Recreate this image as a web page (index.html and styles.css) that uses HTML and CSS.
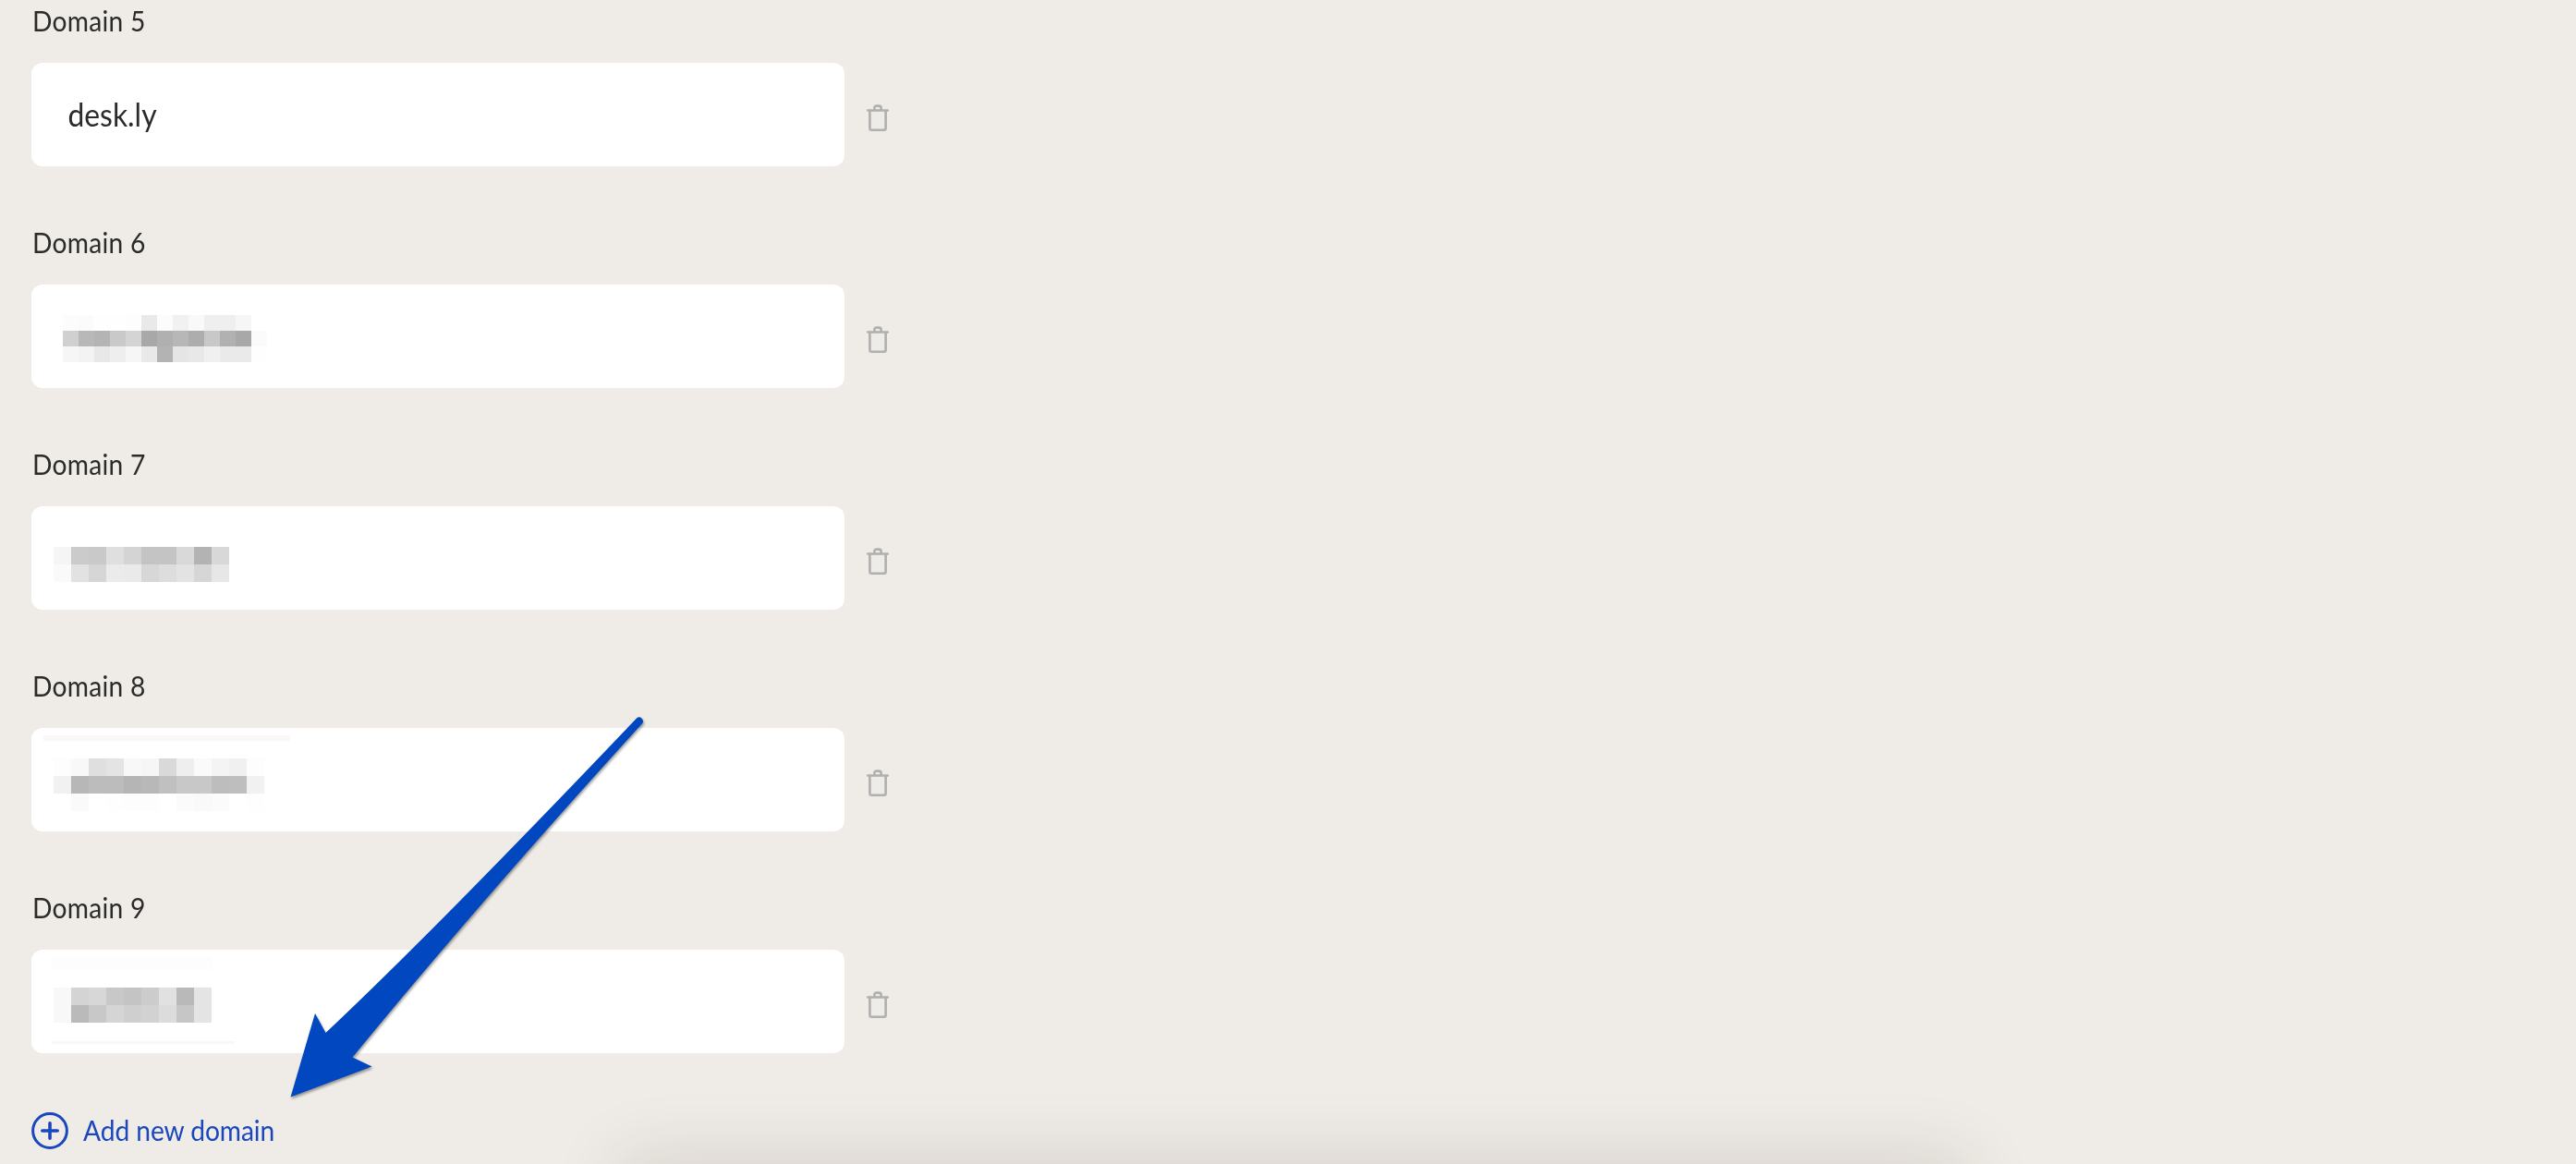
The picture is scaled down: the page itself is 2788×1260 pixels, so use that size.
FILE: index.html
```html
<!DOCTYPE html>
<html lang="en">
<head>
    <meta charset="UTF-8">
    <title>Domains</title>
    <link rel="stylesheet" href="styles.css">
</head>

<body>
    <svg class="sprite" width="0" height="0">
        <symbol id="trash" viewBox="0 0 24 30">
            <path d="M1.2 6.5h21.6M3.4 7v18.8q0 2 2 2h13.2q2 0 2-2V7M8.4 6V4q0-2.4 2.4-2.4h2.4q2.4 0 2.4 2.4v2" fill="none" stroke="#b0b0b0" stroke-width="2.6" stroke-linecap="round"/>
        </symbol>
    </svg>

    <main>
        <form class="domains">
            <div class="domain">
                <label>Domain 5</label>
                <div class="row">
                    <div class="field"><span class="value">desk.ly</span></div>
                    <svg class="trash"><use href="#trash"/></svg>
                </div>
            </div>
            <div class="domain">
                <label>Domain 6</label>
                <div class="row">
                    <div class="field"><div class="mosaic small" data-mosaic="domain6"></div></div>
                    <svg class="trash"><use href="#trash"/></svg>
                </div>
            </div>
            <div class="domain">
                <label>Domain 7</label>
                <div class="row">
                    <div class="field"><div class="mosaic low" data-mosaic="domain7"></div></div>
                    <svg class="trash"><use href="#trash"/></svg>
                </div>
            </div>
            <div class="domain">
                <label>Domain 8</label>
                <div class="row">
                    <div class="field"><i class="streak top"></i><div class="mosaic" data-mosaic="domain8"></div></div>
                    <svg class="trash"><use href="#trash"/></svg>
                </div>
            </div>
            <div class="domain">
                <label>Domain 9</label>
                <div class="row">
                    <div class="field"><i class="streak faint"></i><div class="mosaic mid" data-mosaic="domain9"></div><i class="streak bottom"></i></div>
                    <svg class="trash"><use href="#trash"/></svg>
                </div>
            </div>
        </form>

        <a class="add">
            <svg width="40" height="40" viewBox="0 0 40 40" fill="none" stroke="#1a47bd" stroke-linecap="round">
                <circle cx="20" cy="20" r="18.4" stroke-width="3"/>
                <path d="M20 11.8v16.4M11.8 20h16.4" stroke-width="3.6"/>
            </svg>
            <span>Add new domain</span>
        </a>
    </main>

    <svg class="arrow" width="420" height="440" viewBox="300 765 420 440">
        <path d="M314.5 1187.5L341 1097L352.5 1118Q469 1008.5 689 777.5A4.2 4.2 0 0 1 695 783.3Q520 975.5 381.5 1144.5L402.5 1154.5Z" fill="#0047c0"/>
    </svg>
    <div class="dock-shadow"></div>
<script src="mosaic.js"></script>
</body>
</html>
```
FILE: styles.css
```css
body {
    position: relative;
    height: 1260px;
    margin: 0;
    overflow: hidden;
    background-color: #efebe6;
    color: #2b2b2b;
    font-family: Lato, sans-serif;
}

main {
    padding-left: 34px;
}

.sprite {
    position: absolute;
}

.domains {
    display: flex;
    flex-direction: column;
    gap: 60px;
}

label, .value, .add span {
    transform: scaleX(0.91);
    transform-origin: left;
}

label {
    display: block;
    height: 48px;
    margin-bottom: 20px;
    padding-left: 1px;
    font-size: 31px;
    line-height: 45px;
    letter-spacing: 0.3px;
}

.row {
    display: flex;
    align-items: center;
    gap: 24px;
}

.field {
    position: relative;
    box-sizing: border-box;
    width: 880px;
    height: 112px;
    padding: 33px 24px 0;
    background: #fff;
    border-radius: 12px;
}

.value {
    display: block;
    padding-left: 17px;
    font-size: 35px;
    line-height: 45px;
}

.trash {
    width: 24px;
    height: 30px;
    margin-top: 8px;
}

.mosaic {
    display: grid;
    grid-auto-rows: 19px;
    justify-content: start;
}

.mosaic.small {
    grid-auto-rows: 17px;
    margin-left: 10px;
}

.mosaic.mid {
    margin-top: 8px;
}

.mosaic.low {
    margin-top: 11px;
}

.streak {
    position: absolute;
    background: #f9f8f6;
}

.streak.top {
    left: 13px;
    top: 8px;
    width: 267px;
    height: 6px;
}

.streak.faint {
    left: 22px;
    top: 8px;
    width: 173px;
    height: 14px;
    background: #fdfdfd;
}

.streak.bottom {
    left: 22px;
    top: 99px;
    width: 198px;
    height: 3px;
}

.add {
    display: flex;
    align-items: center;
    gap: 16px;
    margin-top: 64px;
    color: #1a47bd;
    font-size: 31px;
    line-height: 38px;
}

.add span {
    padding-bottom: 2px;
    letter-spacing: -0.1px;
}

.arrow {
    position: absolute;
    left: 300px;
    top: 765px;
    filter: drop-shadow(1px 2px 1.5px rgba(0, 0, 0, 0.4));
}

/* top edge of the shadow from the bar below the fold */
.dock-shadow {
    position: absolute;
    left: 730px;
    bottom: 0;
    width: 1340px;
    height: 0;
    box-shadow: 0 52px 76px 60px rgba(50, 40, 35, 0.12);
}
```
FILE: mosaic.js
```js
// grey level of every block, row by row
const mosaics = {
    domain6: { size: 17, rows: [
        [252, 251, 254, 254, 253, 233, 252, 241, 249, 239, 239, 246, 255],
        [208, 184, 180, 201, 212, 168, 176, 183, 173, 200, 177, 168, 251],
        [246, 243, 232, 238, 246, 233, 179, 229, 232, 240, 234, 234, 254]
    ]},
    domain7: { size: 19, rows: [
        [245, 203, 201, 223, 212, 196, 196, 217, 179, 216],
        [250, 226, 214, 235, 234, 215, 221, 227, 214, 231]
    ]},
    domain8: { size: 19, rows: [
        [253, 248, 223, 228, 248, 246, 217, 238, 250, 244, 240, 253],
        [241, 183, 188, 188, 181, 184, 192, 200, 200, 189, 190, 241],
        [255, 250, 255, 254, 253, 253, 255, 251, 249, 251, 255, 254]
    ]},
    domain9: { size: 19, rows: [
        [248, 212, 215, 200, 196, 204, 225, 185, 228],
        [248, 186, 200, 213, 207, 210, 220, 198, 228]
    ]}
};

document.querySelectorAll('[data-mosaic]').forEach(function (el) {
    const m = mosaics[el.dataset.mosaic];
    el.style.gridTemplateColumns = `repeat(${m.rows[0].length}, ${m.size}px)`;
    m.rows.flat().forEach(function (v) {
        const block = document.createElement('i');
        block.style.background = `rgb(${v}, ${v}, ${v})`;
        el.appendChild(block);
    });
});
```
